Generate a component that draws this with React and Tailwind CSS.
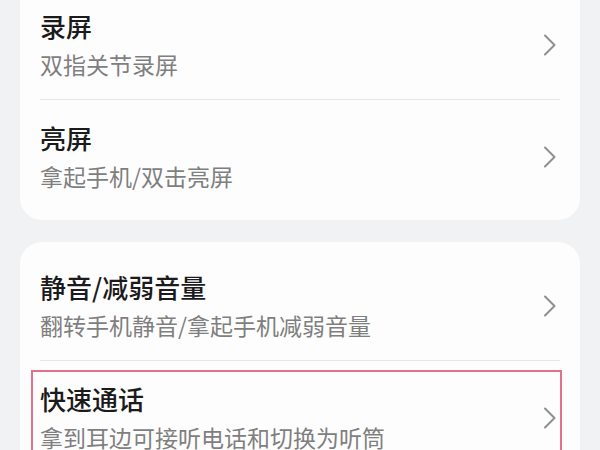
import { Fragment } from 'react';

const groups = [
  [
    { title: '录屏', desc: '双指关节录屏' },
    { title: '亮屏', desc: '拿起手机/双击亮屏' },
  ],
  [
    { title: '静音/减弱音量', desc: '翻转手机静音/拿起手机减弱音量' },
    { title: '快速通话', desc: '拿到耳边可接听电话和切换为听筒', marked: true },
  ],
];

function Chevron() {
  return (
    <svg width="14" height="22" viewBox="0 0 14 22" fill="none" className="shrink-0">
      <path d="M2 1.5 L11.5 11 L2 20.5" stroke="#8f8f8f" strokeWidth="2" strokeLinecap="round" strokeLinejoin="round" />
    </svg>
  );
}

function Row({ title, desc, marked }) {
  return (
    <div className="relative flex items-center justify-between pl-5 pr-[23px] pt-[22px] pb-[20px]">
      <div className="flex flex-col">
        <div className="text-[26px] leading-[32px] font-medium text-[#1b1b1b]">{title}</div>
        <div className="mt-[7px] text-[23px] leading-[30px] text-[#7f7f7f]">{desc}</div>
      </div>
      <Chevron />
      {marked ? (
        <div className="pointer-events-none absolute left-[11px] right-[18px] top-[9px] h-[120px] border-2 border-[#e0728f]" />
      ) : null}
    </div>
  );
}

export default function App() {
  return (
    <div
      className="h-[450px] w-[600px] overflow-hidden bg-[#f1f2f4]"
      style={{ fontFamily: '"Noto Sans CJK SC", "Noto Sans", sans-serif' }}
    >
      <div className="mt-[-19px] flex flex-col gap-[22px] px-5">
        {groups.map((rows, gi) => (
          <div key={gi} className="rounded-[22px] bg-[#fdfdfd] pt-[7px] pb-[9px]">
            {rows.map((row, i) => (
              <Fragment key={row.title}>
                {i > 0 ? <div className="mx-5 h-px bg-[#e6e6e6]" /> : null}
                <Row {...row} />
              </Fragment>
            ))}
          </div>
        ))}
      </div>
    </div>
  );
}
